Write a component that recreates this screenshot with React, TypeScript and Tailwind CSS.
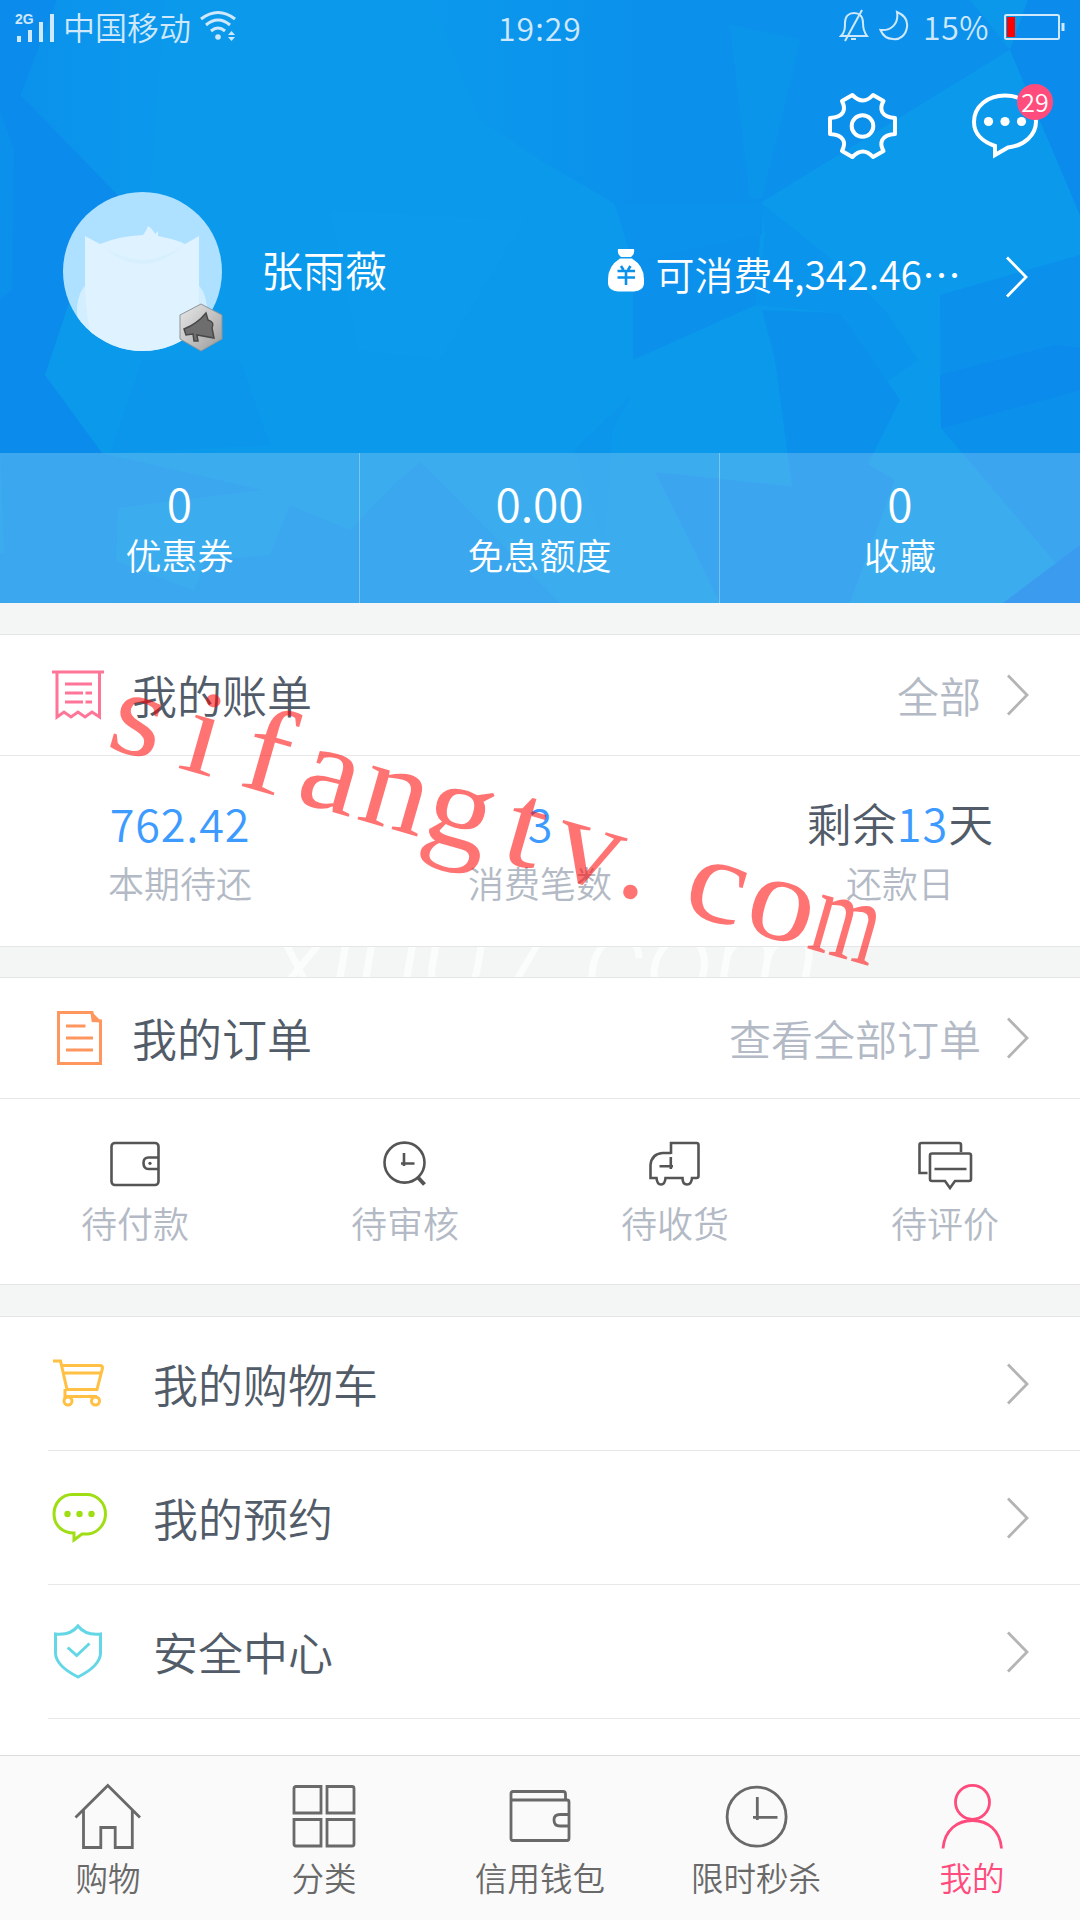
import React from "react";

interface GlyphProps {
  w: number;
  h: number;
  sw?: number;
  className?: string;
  children: React.ReactNode;
}

const Glyph: React.FC<GlyphProps> = ({ w, h, sw = 3, className, children }) => (
  <svg
    width={w}
    height={h}
    viewBox={`0 0 ${w} ${h}`}
    fill="none"
    stroke="currentColor"
    strokeWidth={sw}
    className={className}
  >
    {children}
  </svg>
);

const Chevron: React.FC<{ className?: string }> = ({ className = "text-[#b4b4b4]" }) => (
  <Glyph w={24} h={42} sw={2.8} className={className}>
    <path d="M2 1.5 L21 21 L2 40.5" />
  </Glyph>
);

// low-poly background of the profile header
const facets: { points: string; fill: string }[] = [
  { points: "0,0 57,0 21,95 118,195 70,300 45,375 102,453 0,456", fill: "#0b8cec" },
  { points: "0,110 14,150 12,290 0,300", fill: "#0b90ec" },
  { points: "57,0 165,0 150,193 118,195 21,95", fill: "url(#facet-left)" },
  { points: "142,360 240,360 270,445 110,453", fill: "#0b96ec" },
  { points: "430,0 1080,0 1080,215 1010,50 762,202 762,235 633,262 615,204 540,160 480,120", fill: "url(#facet-top)" },
  { points: "730,25 800,40 762,198 750,198", fill: "#0b95ea" },
  { points: "1010,50 1028,0 970,0", fill: "#0b97ea" },
  { points: "1010,50 1028,0 1080,0 1080,215", fill: "#0b8cec" },
  { points: "615,204 762,202 760,235 633,262", fill: "#0b92ec" },
  { points: "633,262 760,235 756,305 633,360", fill: "#0b91ec" },
  { points: "760,202 845,270 885,310 918,360 860,400 840,313 756,305 765,235", fill: "#0b94ec" },
  { points: "762,310 840,313 900,400 850,500 810,620 775,360", fill: "#0b90ec" },
  { points: "940,295 1080,255 1080,592 941,428", fill: "#0b90ec" },
  { points: "940,375 1055,345 1080,348 1080,390 941,428", fill: "#0b8bec" },
  { points: "632,395 574,450 605,548 612,430", fill: "#0b96ec" },
  { points: "330,210 525,220 440,360 358,350", fill: "#0b9aec" },
  { points: "0,553 102,556 262,616 120,655 120,840 0,840", fill: "#0b91ec" },
  { points: "102,453 262,490 118,508 115,603 6,603 0,453", fill: "#0b92ec" },
  { points: "290,505 350,530 398,480 421,462 560,603 190,603 205,560 270,555", fill: "#0b92ec" },
  { points: "655,472 808,488 850,453 895,480 850,603 720,603", fill: "#0b90ec" },
  { points: "1080,545 1080,603 1003,603", fill: "#0b82ea" },
];

const HeaderBackdrop: React.FC = () => (
  <svg className="absolute inset-0" width="1080" height="603" viewBox="0 0 1080 603">
    <defs>
      <linearGradient id="facet-top" gradientUnits="userSpaceOnUse" x1="430" y1="0" x2="640" y2="0">
        <stop offset="0" stopColor="#0b99ec" />
        <stop offset="1" stopColor="#0b91ec" />
      </linearGradient>
      <linearGradient id="facet-left" gradientUnits="userSpaceOnUse" x1="21" y1="0" x2="165" y2="0">
        <stop offset="0" stopColor="#0b92ec" />
        <stop offset="1" stopColor="#0b98ec" />
      </linearGradient>
    </defs>
    <rect width="1080" height="603" fill="#0b99ec" />
    {facets.map((f) => (
      <polygon key={f.points} points={f.points} fill={f.fill} />
    ))}
  </svg>
);

const StatusBar: React.FC = () => (
  <div className="relative grid h-14 grid-cols-3 items-center text-[32px] leading-[54px] text-[#cfe8fb]">
    <div className="flex items-center pl-4">
      <svg width="40" height="30" viewBox="0 0 40 30" fill="currentColor" className="mr-[7px] overflow-visible">
        <text x="-1" y="11" fontSize="14" fontWeight="700" fontFamily="Liberation Sans, sans-serif">
          2G
        </text>
        <rect x="1" y="23" width="4" height="6" />
        <rect x="12" y="17" width="4" height="12" />
        <rect x="23" y="9" width="4" height="20" />
        <rect x="34" y="1" width="4" height="28" />
      </svg>
      <span className="-mt-[5px]">中国移动</span>
      <Glyph w={38} h={32} className="-mt-1 ml-2">
        <path d="M2 9 Q19 -4 36 9" />
        <path d="M7 15 Q19 5 31 15" />
        <path d="M12 21 Q19 15 26 21" />
        <circle cx="19" cy="27" r="2.8" fill="currentColor" stroke="none" />
        <path d="M29 25 l3.5 -4 l3.5 4z M29 27 l3.5 4 l3.5 -4z" fill="currentColor" stroke="none" />
      </Glyph>
    </div>
    <div className="-mt-0.5 text-center tracking-[1px]">19:29</div>
    <div className="flex items-center justify-end pr-[15px]">
      <Glyph w={30} h={34} sw={2} className="-mt-1">
        <path d="M2 27 C6 23 6 19 6 14 C6 7 10 4 15 4 C20 4 24 7 24 14 C24 19 25 23 28 27 Z M12 30 H17" />
        <path d="M23 1 L6 32" />
      </Glyph>
      <Glyph w={30} h={32} sw={2} className="-mt-1 ml-2.5">
        <path d="M18 2 C25 5 29 10 28 17 C27 25 21 30 14 29 C8 29 4 26 1.500 20 C12 21 20 14 18 2Z" />
      </Glyph>
      <span className="-mt-[5px] ml-[14px] tracking-[0.5px]">15%</span>
      <svg width="62" height="28" viewBox="0 0 62 28" className="-mt-[3px] ml-3.5">
        <rect x="2" y="2" width="54" height="24" rx="1.500" fill="none" stroke="currentColor" strokeWidth="2" />
        <rect x="4" y="4" width="8" height="20" fill="#ff0000" />
        <rect x="58.500" y="10" width="3" height="8" fill="currentColor" />
      </svg>
    </div>
  </div>
);

const Avatar: React.FC = () => (
  <svg width="160" height="168" viewBox="0 0 160 168">
    <defs>
      <clipPath id="avatar-clip">
        <circle cx="79.5" cy="79.5" r="79.5" />
      </clipPath>
      <linearGradient id="badge-metal" x1="0" y1="0" x2="1" y2="1">
        <stop offset="0" stopColor="#e8e8e8" />
        <stop offset="0.5" stopColor="#c4c4c4" />
        <stop offset="1" stopColor="#999999" />
      </linearGradient>
    </defs>
    <g clipPath="url(#avatar-clip)">
      <rect width="160" height="160" fill="#aee0ff" />
      <ellipse cx="30" cy="118" rx="16" ry="28" fill="#d3eefe" />
      <ellipse cx="128" cy="118" rx="16" ry="28" fill="#d3eefe" />
      <path
        d="M22 44 L37 52 Q56 44 80 43 Q84 38 85 34 Q89 36 92 42 L95 39 L95 44 Q112 47 122 52 L136 44 L136 100 Q136 140 120 165 H34 Q22 130 22 90 Z"
        fill="#def2ff"
      />
      <path d="M37 52 Q80 92 122 52 Q104 66 80 68 Q54 66 37 52Z" fill="#d8f0fe" />
    </g>
    <path d="M138 112 L159 123 V147 L138 159 L117 147 V123 Z" fill="url(#badge-metal)" stroke="#8f9499" strokeWidth="1" />
    <path
      d="M121 137 Q134 132 143 121 L145 128 Q152 130 149 136 L151 146 L134 143 L135 149 H131 L130 142 L123 143 Z"
      fill="#6e6e6e"
      stroke="#484848"
      strokeWidth="1.500"
    />
  </svg>
);

const MoneyBag: React.FC = () => (
  <svg width="36" height="43" viewBox="0 0 36 43">
    <path d="M10 0 H26 Q27 5 23 8 H13 Q9 5 10 0Z" fill="#fff" />
    <path d="M12 9.500 H24 Q36 17 36 30 V35 Q35 42 26 42.500 H10 Q1 42 0 35 V30 Q0 17 12 9.500Z" fill="#fff" />
    <path d="M13 17 L15.500 21 M22.500 17 L20 21 M9.500 22 H27 M9.500 28.500 H27 M18 21 V36" stroke="#0b91ec" strokeWidth="2.600" fill="none" />
  </svg>
);

const ProfileHeader: React.FC = () => (
  <header className="relative h-[603px] overflow-hidden text-white">
    <HeaderBackdrop />
    <StatusBar />
    <div className="relative mt-9 flex justify-end gap-[74px] pr-[42px]">
      <Glyph w={70} h={68} sw={4}>
        <path
          d="M24.400 3 Q35 14 45 3 L55.500 9 C51 17 53 25 67 26 V42 C53 43 51 51 55.500 59 L45 65 Q35 54 24.400 65 L14 59 C18 51 17 43 2 42 V26 C17 25 18 17 14 9Z"
          strokeLinejoin="round"
        />
        <circle cx="34.500" cy="34" r="10.800" />
      </Glyph>
      <div className="relative">
        <Glyph w={66} h={68} sw={4}>
          <path d="M23 54 V63 L36 55.500 C52 54 64 43 64 29.500 C64 14 50 3.500 33 3.500 S2 14 2 30 C2 42 11 50 23 54Z" />
          <g fill="currentColor" stroke="none">
            <circle cx="16.500" cy="29.500" r="4.600" />
            <circle cx="33" cy="29.500" r="4.600" />
            <circle cx="49.500" cy="29.500" r="4.600" />
          </g>
        </Glyph>
        <span className="absolute -right-[15px] -top-2 size-9 rounded-full bg-[#ff4c7c] text-center text-[25px] leading-[35px]">
          29
        </span>
      </div>
    </div>
    <div className="relative mt-8 flex h-40 items-center pl-[63px] pr-[51px]">
      <div className="h-40">
        <Avatar />
      </div>
      <span className="-mt-[6px] ml-[38px] text-[42px] leading-[60px]">张雨薇</span>
      <div className="ml-auto flex items-center pt-1">
        <div className="mr-3 pb-2">
          <MoneyBag />
        </div>
        <span className="-mt-[3px] text-[39px] leading-[60px]">可消费4,342.46⋯</span>
        <div className="ml-[44px] pt-1.5">
          <Chevron className="text-white" />
        </div>
      </div>
    </div>
    <div className="relative mt-[101px] grid h-[150px] grid-cols-3 bg-white/20">
      {[
        { value: "0", label: "优惠券" },
        { value: "0.00", label: "免息额度" },
        { value: "0", label: "收藏" },
      ].map((s) => (
        <div
          key={s.label}
          className="flex flex-col items-center border-r border-white/30 pt-[21px] last:border-r-0"
        >
          <span className="text-[46px] leading-[56px]">{s.value}</span>
          <span className="text-[36px] leading-[48px]">{s.label}</span>
        </div>
      ))}
    </div>
  </header>
);

interface SectionHeadProps {
  icon: React.ReactNode;
  title: string;
  more: string;
}

const SectionHead: React.FC<SectionHeadProps> = ({ icon, title, more }) => (
  <div className="flex h-[121px] items-center border-b border-[#e6e8ea] pl-[52px] pr-[50px]">
    <div className="w-20">{icon}</div>
    <h2 className="text-[45px] leading-[60px] text-[#525c69]">{title}</h2>
    <span className="-mt-px ml-auto mr-[25px] text-[42px] leading-[60px] text-[#b3bac5]">{more}</span>
    <Chevron className="-mt-px text-[#b4b4b4]" />
  </div>
);

const ReceiptIcon = (
  <Glyph w={52} h={52} className="text-[#ff7598]">
    <path d="M0 3 H52" />
    <path d="M5 2 V48 L12 43 L19 48 L26 43 L33 48 L40 43 L47.500 48 V2" />
    <path d="M13 15 H40 M13 24 H31 M33.500 24 H40 M13 33 H31 M33.500 33 H40" />
  </Glyph>
);

const DocumentIcon = (
  <Glyph w={52} h={56} className="text-[#ff965e]">
    <path d="M6.500 2.500 H40 L41 10.500 L48.500 11 V53.500 H6.500Z" />
    <path d="M40 2 V11 H49 Z" fill="currentColor" stroke="none" />
    <path d="M14 16 H33.500 M14 28 H41 M14 40 H41" />
  </Glyph>
);

const BillSection: React.FC = () => (
  <section className="border-y border-[#e3e5e7] bg-white">
    <SectionHead icon={ReceiptIcon} title="我的账单" more="全部" />
    <div className="grid h-[190px] grid-cols-3 pt-[36px] text-center text-[45px] leading-[62px] text-[#3d9bff]">
      <div>
        <p className="tracking-[0.8px]">762.42</p>
        <p className="text-[36px] leading-[56px] text-[#b3bac5]">本期待还</p>
      </div>
      <div>
        <p>3</p>
        <p className="text-[36px] leading-[56px] text-[#b3bac5]">消费笔数</p>
      </div>
      <div>
        <p>
          <span className="text-[#525c69]">剩余</span>
          <span className="tracking-[1px]">13</span>
          <span className="text-[#525c69]">天</span>
        </p>
        <p className="text-[36px] leading-[56px] text-[#b3bac5]">还款日</p>
      </div>
    </div>
  </section>
);

const orderStates = [
  {
    label: "待付款",
    icon: (
      <Glyph w={52} h={50} sw={2.6}>
        <rect x="2.500" y="2" width="47" height="42" rx="3.500" />
        <path d="M49.500 16.500 H39.500 Q34.500 16.500 34.500 22 Q34.500 28 39.500 28 H49.500" />
        <circle cx="41" cy="22.300" r="1.600" fill="currentColor" stroke="none" />
      </Glyph>
    ),
  },
  {
    label: "待审核",
    icon: (
      <Glyph w={46} h={50} sw={2.6}>
        <circle cx="22.500" cy="21.600" r="20" />
        <path d="M22 12 V25 M19 22.500 H32.500" />
        <path d="M35.500 36 L42.500 43.500" strokeWidth="4" />
      </Glyph>
    ),
  },
  {
    label: "待收货",
    icon: (
      <Glyph w={52} h={50} sw={2.6}>
        <path d="M22 13 V2 H47.500 Q49.500 2 49.500 4 V35 Q49.500 37 47.500 37 H43 Q42.500 43.500 38 43.500 T33.500 37 H16.500 Q16 43.500 12 43.500 T7.500 37 H1.500 V24 Q2.500 13 13.500 12 H22" />
        <path d="M10.500 25.300 H24 M21.800 16 V28" />
      </Glyph>
    ),
  },
  {
    label: "待评价",
    icon: (
      <Glyph w={56} h={50} sw={2.6}>
        <path d="M10.500 32 H2.500 V4 Q2.500 2 4.500 2 H42 Q44 2 44 4 V11" />
        <path d="M14.500 12.500 H52 Q54 12.500 54 14.500 V38 Q54 40 52 40 H38 L33 47 L28 40 H15 Q13 40 13 38 V14.500 Q13 12.500 15 12.500Z M17.500 28 H49.500" />
      </Glyph>
    ),
  },
];

const OrderSection: React.FC = () => (
  <section className="border-y border-[#e3e5e7] bg-white">
    <SectionHead icon={DocumentIcon} title="我的订单" more="查看全部订单" />
    <div className="grid h-[185px] grid-cols-4 pt-[42px] text-[#555555]">
      {orderStates.map((o) => (
        <div key={o.label} className="flex flex-col items-center">
          {o.icon}
          <span className="mt-[7px] text-[36px] leading-[48px] text-[#b3bac5]">{o.label}</span>
        </div>
      ))}
    </div>
  </section>
);

const menu = [
  {
    label: "我的购物车",
    icon: (
      <Glyph w={56} h={50} className="text-[#ffc043]">
        <path d="M1 2 H8.500 L15 30.500 H45 L50.500 9 Q50.500 6.500 48 6.500 H10 M10.500 14 H49 M13 30 V37.500 H45" />
        <circle cx="16" cy="42" r="4" />
        <circle cx="43.500" cy="42" r="4" />
      </Glyph>
    ),
  },
  {
    label: "我的预约",
    icon: (
      <Glyph w={56} h={52} className="text-[#9fde13]">
        <path d="M22 42 V48 L30 42 H36 C46 41 53.500 32 53.500 22 C53.500 10 44 2.500 35 2.500 H20 C10 2.500 2 11 2 22 C2 33 10 41 22 41Z" />
        <g fill="currentColor" stroke="none">
          <circle cx="15.500" cy="22" r="3.200" />
          <circle cx="27.500" cy="22" r="3.200" />
          <circle cx="39.500" cy="22" r="3.200" />
        </g>
      </Glyph>
    ),
  },
  {
    label: "安全中心",
    icon: (
      <Glyph w={56} h={56} className="text-[#63d7e6]">
        <path d="M26 2 C21 8.500 14 11 3.500 10 V29.500 C4 38.500 13 46.500 26 53 C39 46.500 48 38.500 48.500 29.500 V10 C39 11 31 8.500 26 2Z" />
        <path d="M15.700 23.500 L24.700 31.500 L37.500 19.500" />
      </Glyph>
    ),
  },
];

const MenuList: React.FC = () => (
  <section className="h-[439px] border-t border-[#e3e5e7] bg-white pl-12">
    {menu.map((m) => (
      <div key={m.label} className="flex h-[134px] items-center border-b border-[#e6e8ea] pl-1 pr-[50px]">
        {m.icon}
        <span className="ml-[45px] text-[45px] leading-[60px] text-[#525c69]">{m.label}</span>
        <Chevron className="ml-auto text-[#b4b4b4]" />
      </div>
    ))}
  </section>
);

const tabs = [
  {
    label: "购物",
    icon: (
      <path d="M1.500 34.500 L33.800 2.500 L66 34.500 M9.500 27 V64.500 H26.800 V44.500 H41.200 V64.500 H58.300 V27" />
    ),
  },
  {
    label: "分类",
    icon: (
      <path d="M6 3.500 H31 V30 H4 V5.500 Q4 3.500 6 3.500Z M37 3.500 H62 Q64 3.500 64 5.500 V30 H37Z M4 36.500 H31 V63 H6 Q4 63 4 61Z M37 36.500 H64 V61 Q64 63 62 63 H37Z" />
    ),
  },
  {
    label: "信用钱包",
    icon: (
      <path d="M5 17 H61 Q63 17 63 19 V55 Q63 57.500 61 57.500 H7 Q5 57.500 5 55.500 V10.500 Q5 8.500 7 8.500 H57 Q59.500 8.500 59.500 11 V17 M63 31.500 H54 Q48 31.500 48 37 Q48 43 54 43 H63" />
    ),
  },
  {
    label: "限时秒杀",
    icon: (
      <>
        <circle cx="34.600" cy="33.700" r="29.500" />
        <path d="M35.300 14 V37 M31 34.300 H55.500" />
      </>
    ),
  },
  {
    label: "我的",
    active: true,
    icon: (
      <>
        <circle cx="34.500" cy="19.300" r="17" />
        <path d="M5 65.500 C6.500 47 19.500 37.500 34.500 37.500 S62 47 63.500 65.500" />
      </>
    ),
  },
];

const TabBar: React.FC = () => (
  <nav className="grid h-[165px] grid-cols-5 border-t border-[#dcdcdc] bg-[#fafafa] pt-[27px]">
    {tabs.map((t) => (
      <div
        key={t.label}
        className={`flex flex-col items-center ${t.active ? "text-[#ff4c7c]" : "text-[#696969]"}`}
      >
        <Glyph w={68} h={68} sw={2.8}>
          {t.icon}
        </Glyph>
        <span className="mt-1 text-[32.5px] leading-[44px]">{t.label}</span>
      </div>
    ))}
  </nav>
);

const Watermark: React.FC = () => (
  <div className="absolute left-[93px] top-[648px] flex origin-bottom-left rotate-[16deg] font-['Liberation_Serif',serif] text-[122px] leading-[110px] font-normal text-[#ff0000]/55">
    {"sifangtv.com".split("").map((c, i) => (
      <span key={i} className="flex w-[67px] justify-center">
        <span className={c === "m" ? "scale-x-[0.7]" : c === "." ? "-translate-x-4" : "scale-x-110"}>{c}</span>
      </span>
    ))}
  </div>
);

export default function App() {
  return (
    <div className="relative h-[1920px] w-[1080px] overflow-hidden bg-[#f4f6f6] font-['Noto_Sans_CJK_SC',sans-serif] font-[350]">
      <ProfileHeader />
      <div className="h-[31px]" />
      <BillSection />
      <div className="relative h-[30px] overflow-hidden">
        <span className="absolute -top-[46px] left-[270px] font-['Roboto',sans-serif] text-[124px] leading-[118px] whitespace-nowrap text-[#fbfcfc] italic">
          xiu07.com
        </span>
      </div>
      <OrderSection />
      <div className="h-[31px]" />
      <MenuList />
      <TabBar />
      <Watermark />
    </div>
  );
}
